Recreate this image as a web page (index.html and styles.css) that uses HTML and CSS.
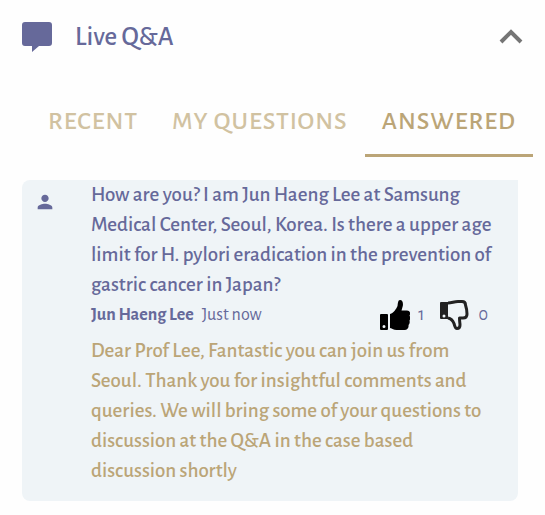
FILE: index.html
```
<!DOCTYPE html>
<html lang="en">
  <head>
    <meta charset="UTF-8" />
    <meta name="viewport" content="width=device-width, initial-scale=1.0" />
    <link rel="stylesheet" href="styles.css">
    <title>Live Q&amp;A</title>
  </head>
  <body>
    <header class="panel-header">
      <svg class="chat-icon" viewBox="0 0 30 30" aria-hidden="true">
        <path d="M3 0h24a3 3 0 0 1 3 3v18a3 3 0 0 1-3 3H17l-7 6v-6H3a3 3 0 0 1-3-3V3a3 3 0 0 1 3-3z" />
      </svg>
      <h1>Live Q&amp;A</h1>
      <button class="collapse" type="button" aria-label="Collapse">
        <svg viewBox="0 0 24 16" aria-hidden="true">
          <path d="M2 13l10-10 10 10" />
        </svg>
      </button>
    </header>
    <nav class="tabs" role="tablist">
      <button class="tab" type="button" role="tab">RECENT</button>
      <button class="tab" type="button" role="tab">MY QUESTIONS</button>
      <button class="tab active" type="button" role="tab" aria-selected="true">ANSWERED</button>
    </nav>
    <main>
      <article class="card">
        <svg class="avatar" viewBox="0 0 24 24" aria-hidden="true">
          <path d="M12 12c2.2 0 4-1.8 4-4s-1.8-4-4-4-4 1.8-4 4 1.8 4 4 4zm0 2c-2.7 0-8 1.3-8 4v2h16v-2c0-2.7-5.3-4-8-4z" />
        </svg>
        <div class="content">
          <p class="question">
            How are you? I am Jun Haeng Lee at Samsung
            Medical Center, Seoul, Korea. Is there a upper age
            limit for H. pylori eradication in the prevention of
            gastric cancer in Japan?
          </p>
          <div class="meta">
            <strong>Jun Haeng Lee</strong>
            <span>Just now</span>
            <div class="votes">
              <button class="vote" type="button" aria-label="Like">
                <svg viewBox="0 0 30 30" aria-hidden="true">
                  <path fill-rule="evenodd" d="M1 14h6q1 0 1 1v14q0 1-1 1H1q-1 0-1-1V15q0-1 1-1zM4 25a1.5 1.5 0 1 0 0 3 1.5 1.5 0 0 0 0-3z" />
                  <path d="M10 14c4-1 6-5 7.5-8 .5-3 .5-6 2.500-6 3 0 3.500 4 2.500 7l-1 3.500H27c3 0 4 3 2.500 5 1 2 1 3.500 0 5 .5 2 0 3.500-1 4.500.5 3-1 5-4 5h-8c-3 0-4-1.500-6.500-2z" />
                </svg>
                <span>1</span>
              </button>
              <button class="vote" type="button" aria-label="Dislike">
                <svg viewBox="0 0 30 30" aria-hidden="true">
                  <path class="cuff" fill-rule="evenodd" d="M1 2h7v17H1q-1 0-1-1V3q0-1 1-1zM4 14.500a1.500 1.500 0 1 0 0 3 1.500 1.500 0 0 0 0-3z" />
                  <path class="outline" d="M8 3c4 0 6-1.500 10-1.500h4c2.500 0 3.500 1.500 3.500 3.500 1 3 1.500 6 1.500 9 0 3-1.500 4-4 4h-3.500c0 4 .5 5 .5 7 0 2.500-1 3.500-3 3.500s-2-2-3-5c-1-2.500-3.500-5-6-5.500" />
                </svg>
                <span>0</span>
              </button>
            </div>
          </div>
          <p class="answer">
            Dear Prof Lee, Fantastic you can join us from
            Seoul. Thank you for insightful comments and
            queries. We will bring some of your questions to
            discussion at the Q&amp;A in the case based
            discussion shortly
          </p>
        </div>
      </article>
    </main>
  </body>
</html>
```
FILE: styles.css
```
* {
  box-sizing: border-box;
  margin: 0;
  padding: 0;
  --purple: #66699a;
  --gold: #bba577;
  --pale: #eff4f7;
}

body {
  font-family: 'Alegreya Sans', Lato, 'Open Sans', sans-serif;
  color: var(--purple);
  background-color: #fefefe;
}

button {
  border: none;
  background: none;
  font-family: inherit;
  color: inherit;
  cursor: pointer;
}

.panel-header {
  display: flex;
  align-items: center;
  gap: 23px;
  height: 74px;
  padding: 0 22px;
}

.chat-icon {
  width: 30px;
  height: 30px;
  fill: var(--purple);
}

h1 {
  flex: 1;
  font-size: 27px;
  font-weight: 500;
}

.collapse svg {
  display: block;
  width: 24px;
  height: 16px;
  fill: none;
  stroke: #757575;
  stroke-width: 4;
}

.tabs {
  display: flex;
  justify-content: flex-end;
  padding: 12px 12px 0;
}

.tab {
  height: 71px;
  padding: 2px 17px 0;
  border-bottom: 3px solid transparent;
  font-size: 26px;
  font-weight: 500;
  letter-spacing: 1px;
  white-space: nowrap;
  color: #d1c2a1;
}

.tab.active {
  border-color: var(--gold);
  color: var(--gold);
}

main {
  padding: 23px 27px 14px 22px;
}

.card {
  display: flex;
  gap: 35px;
  padding: 0 22px 15px 12px;
  border-radius: 8px 0 8px 8px;
  background-color: var(--pale);
}

.avatar {
  flex: none;
  width: 22px;
  height: 22px;
  margin-top: 11px;
  fill: var(--purple);
}

.content {
  flex: 1;
}

.question,
.answer {
  font-size: 21px;
  font-weight: 500;
  line-height: 30px;
}

.answer {
  margin-top: 6px;
  color: var(--gold);
}

.meta {
  display: flex;
  align-items: center;
  gap: 8px;
  height: 30px;
  font-size: 18px;
}

.votes {
  display: flex;
  gap: 16px;
  margin-left: auto;
  padding-right: 8px;
}

.vote {
  display: flex;
  align-items: center;
  gap: 8px;
  font-size: 18px;
}

.vote svg {
  width: 30px;
  height: 30px;
  fill: #000;
}

.vote .cuff {
  fill: #222;
}

.vote .outline {
  fill: none;
  stroke: #222;
  stroke-width: 3;
  stroke-linejoin: round;
}
```
